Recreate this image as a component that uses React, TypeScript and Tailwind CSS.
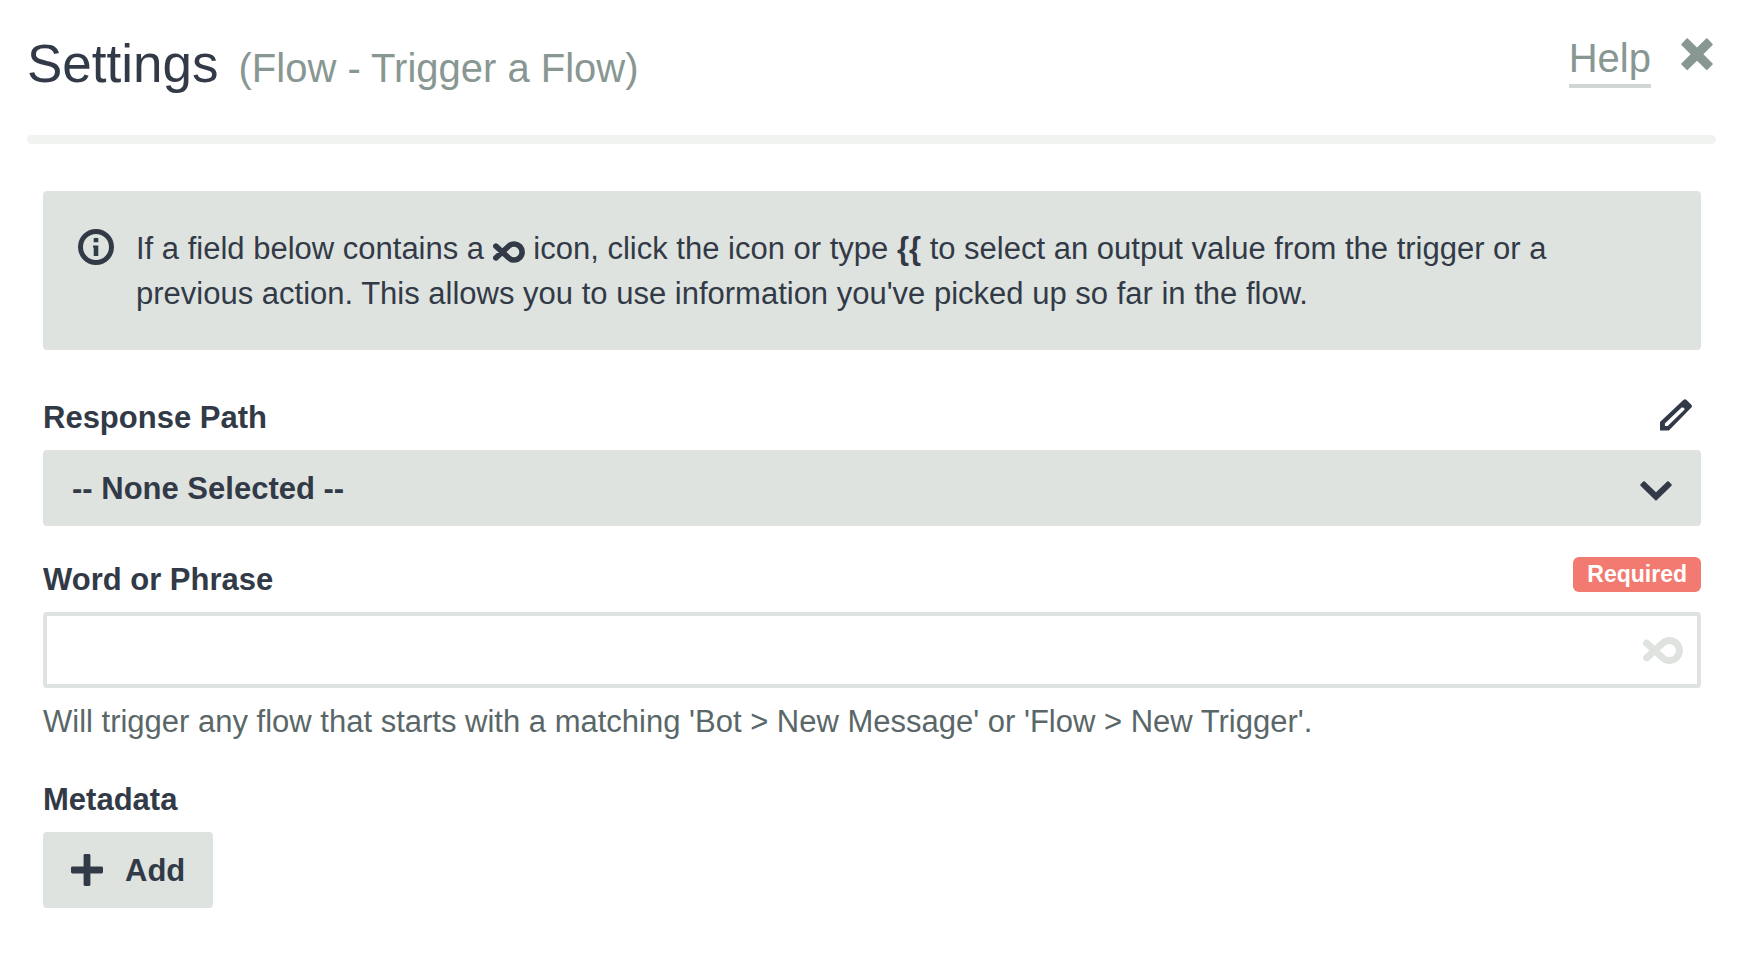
import { useState } from 'react'
import type { ReactNode } from 'react'

function CloseIcon() {
  return (
    <svg className="size-8" viewBox="0 0 32 32" fill="currentColor" aria-hidden="true">
      <path d="M.4 5.9 5.6.5Q6.2 0 6.8.5L16 9.6 25.2.5Q25.8 0 26.4.5L31.6 5.9Q32 6.4 31.6 6.9L22.4 16.2 31.6 25.5Q32 26 31.6 26.5L26.4 31.7Q25.8 32.2 25.2 31.7L16 22.8 6.8 31.7Q6.2 32.2 5.6 31.7L.4 26.5Q0 26 .4 25.5L9.6 16.2.4 6.9Q0 6.4.4 5.9Z" />
    </svg>
  )
}

function InfoIcon() {
  return (
    <svg className="size-9 shrink-0" viewBox="0 0 36 36" fill="currentColor" aria-hidden="true">
      <circle cx="18" cy="18" r="15.5" fill="none" stroke="currentColor" strokeWidth="5" />
      <path d="M15.7 9h4.6v4.2h-4.6zM15 16.4h5.3V27h-4.6v-8.6H15z" />
    </svg>
  )
}

function LoopIcon({ className }: { className: string }) {
  return (
    <svg
      className={className}
      viewBox="0 0 40 27"
      fill="none"
      stroke="currentColor"
      strokeWidth="7"
      strokeLinecap="round"
      strokeLinejoin="round"
      aria-hidden="true"
    >
      <path d="M3.6 6.2 19.8 21A10 10 0 1 0 19.8 6L3.6 20.8" />
    </svg>
  )
}

function PencilIcon() {
  return (
    <svg className="size-8" viewBox="0 0 32 32" fill="currentColor" aria-hidden="true">
      <path
        fillRule="evenodd"
        d="M0 31.4V23L23.6.7Q25 0 26.3.7L31.6 6Q32.3 7.2 31.6 8.3L8.9 31.4ZM4.9 24.4V27H7.7L24.6 10.6 24 8.8 21.6 8.6Z"
      />
    </svg>
  )
}

function ChevronIcon() {
  return (
    <svg
      className="pointer-events-none absolute right-[29px] top-[31px] h-5 w-8"
      viewBox="0 0 32 20"
      fill="currentColor"
      aria-hidden="true"
    >
      <path d="M.5 3.2 3.2.5Q4 0 4.8.5L16 11.2 27.2.5Q28 0 28.8.5L31.5 3.2Q32 4 31.5 4.8L16.7 19.2Q16 19.8 15.3 19.2L.5 4.8Q0 4 .5 3.2Z" />
    </svg>
  )
}

function PlusIcon() {
  return (
    <svg className="size-8" viewBox="0 0 32 32" fill="currentColor" aria-hidden="true">
      <rect x="12.6" y="0" width="6.8" height="32" rx="1.4" />
      <rect x="0" y="12.6" width="32" height="6.8" rx="1.4" />
    </svg>
  )
}

function FieldHeader({ label, htmlFor, children }: { label: string; htmlFor: string; children?: ReactNode }) {
  return (
    <div className="mb-[10px] flex items-start justify-between">
      <label htmlFor={htmlFor} className="font-bold">
        {label}
      </label>
      {children}
    </div>
  )
}

export default function App() {
  const [path, setPath] = useState('')
  const [phrase, setPhrase] = useState('')

  return (
    <div className="min-h-screen bg-white pb-10 pl-[27px] pr-[21px] pt-[34px] font-['Liberation_Sans',Arial,sans-serif] text-[31px] leading-[45px] text-[#323a47]">
      {/* Header */}
      <header className="flex items-start justify-between text-[40px] text-[#899793]">
        <div className="flex items-baseline gap-5">
          <h1 className="text-[53px] leading-[60px] text-[#323a47]">Settings</h1>
          <span className="leading-[60px]">(Flow - Trigger a Flow)</span>
        </div>
        <div className="flex items-start gap-[30px] pr-[3px] pt-1">
          <a href="#help" className="border-b-4 border-[#d0d7d3] pb-[6px] leading-[40px]">
            Help
          </a>
          <button type="button" aria-label="Close">
            <CloseIcon />
          </button>
        </div>
      </header>

      <div className="mt-[37px] h-[9px] rounded-full bg-[#f1f3f1]"></div>

      <main className="mt-[47px] pl-4 pr-[15px]">
        {/* Hint */}
        <div className="flex items-start gap-[22px] rounded bg-[#dee3df] px-[35px] pb-[34px] pt-[35px]">
          <div className="pt-[3px]">
            <InfoIcon />
          </div>
          <p>
            If a field below contains a <LoopIcon className="inline-block h-[22px] w-8 align-[-4px]" /> icon, click the
            icon or type <b>{'{{'}</b> to select an output value from the trigger or a previous action. This allows you
            to use information you've picked up so far in the flow.
          </p>
        </div>

        {/* Response path */}
        <div className="mt-[45px]">
          <FieldHeader label="Response Path" htmlFor="response-path">
            <button type="button" aria-label="Edit response path" className="mr-[9px] mt-1">
              <PencilIcon />
            </button>
          </FieldHeader>
          <div className="relative">
            <select
              id="response-path"
              value={path}
              onChange={e => setPath(e.target.value)}
              className="block h-[76px] w-full appearance-none rounded bg-[#dee3df] pl-[29px] pr-20 font-bold"
            >
              <option value="">-- None Selected --</option>
            </select>
            <ChevronIcon />
          </div>
        </div>

        {/* Word or phrase */}
        <div className="mt-[31px]">
          <FieldHeader label="Word or Phrase" htmlFor="phrase">
            <span className="rounded-md bg-[#f27a70] px-[14px] text-[23px] font-bold leading-[35px] text-white">
              Required
            </span>
          </FieldHeader>
          <div className="relative">
            <input
              id="phrase"
              type="text"
              value={phrase}
              onChange={e => setPhrase(e.target.value)}
              className="block h-[76px] w-full rounded border-4 border-[#dee3df] bg-white pl-6 pr-20"
            />
            <button
              type="button"
              aria-label="Insert output value"
              className="absolute right-[18px] top-[25px] text-[#dee3df]"
            >
              <LoopIcon className="h-[27px] w-10" />
            </button>
          </div>
          <p className="mt-[11px] text-[#5a6768]">
            Will trigger any flow that starts with a matching 'Bot &gt; New Message' or 'Flow &gt; New Trigger'.
          </p>
        </div>

        {/* Metadata */}
        <div className="mt-[33px]">
          <FieldHeader label="Metadata" htmlFor="add-metadata" />
          <button
            id="add-metadata"
            type="button"
            className="flex h-[76px] items-center gap-[22px] rounded bg-[#dee3df] px-[28px] font-bold"
          >
            <PlusIcon />
            Add
          </button>
        </div>
      </main>
    </div>
  )
}
